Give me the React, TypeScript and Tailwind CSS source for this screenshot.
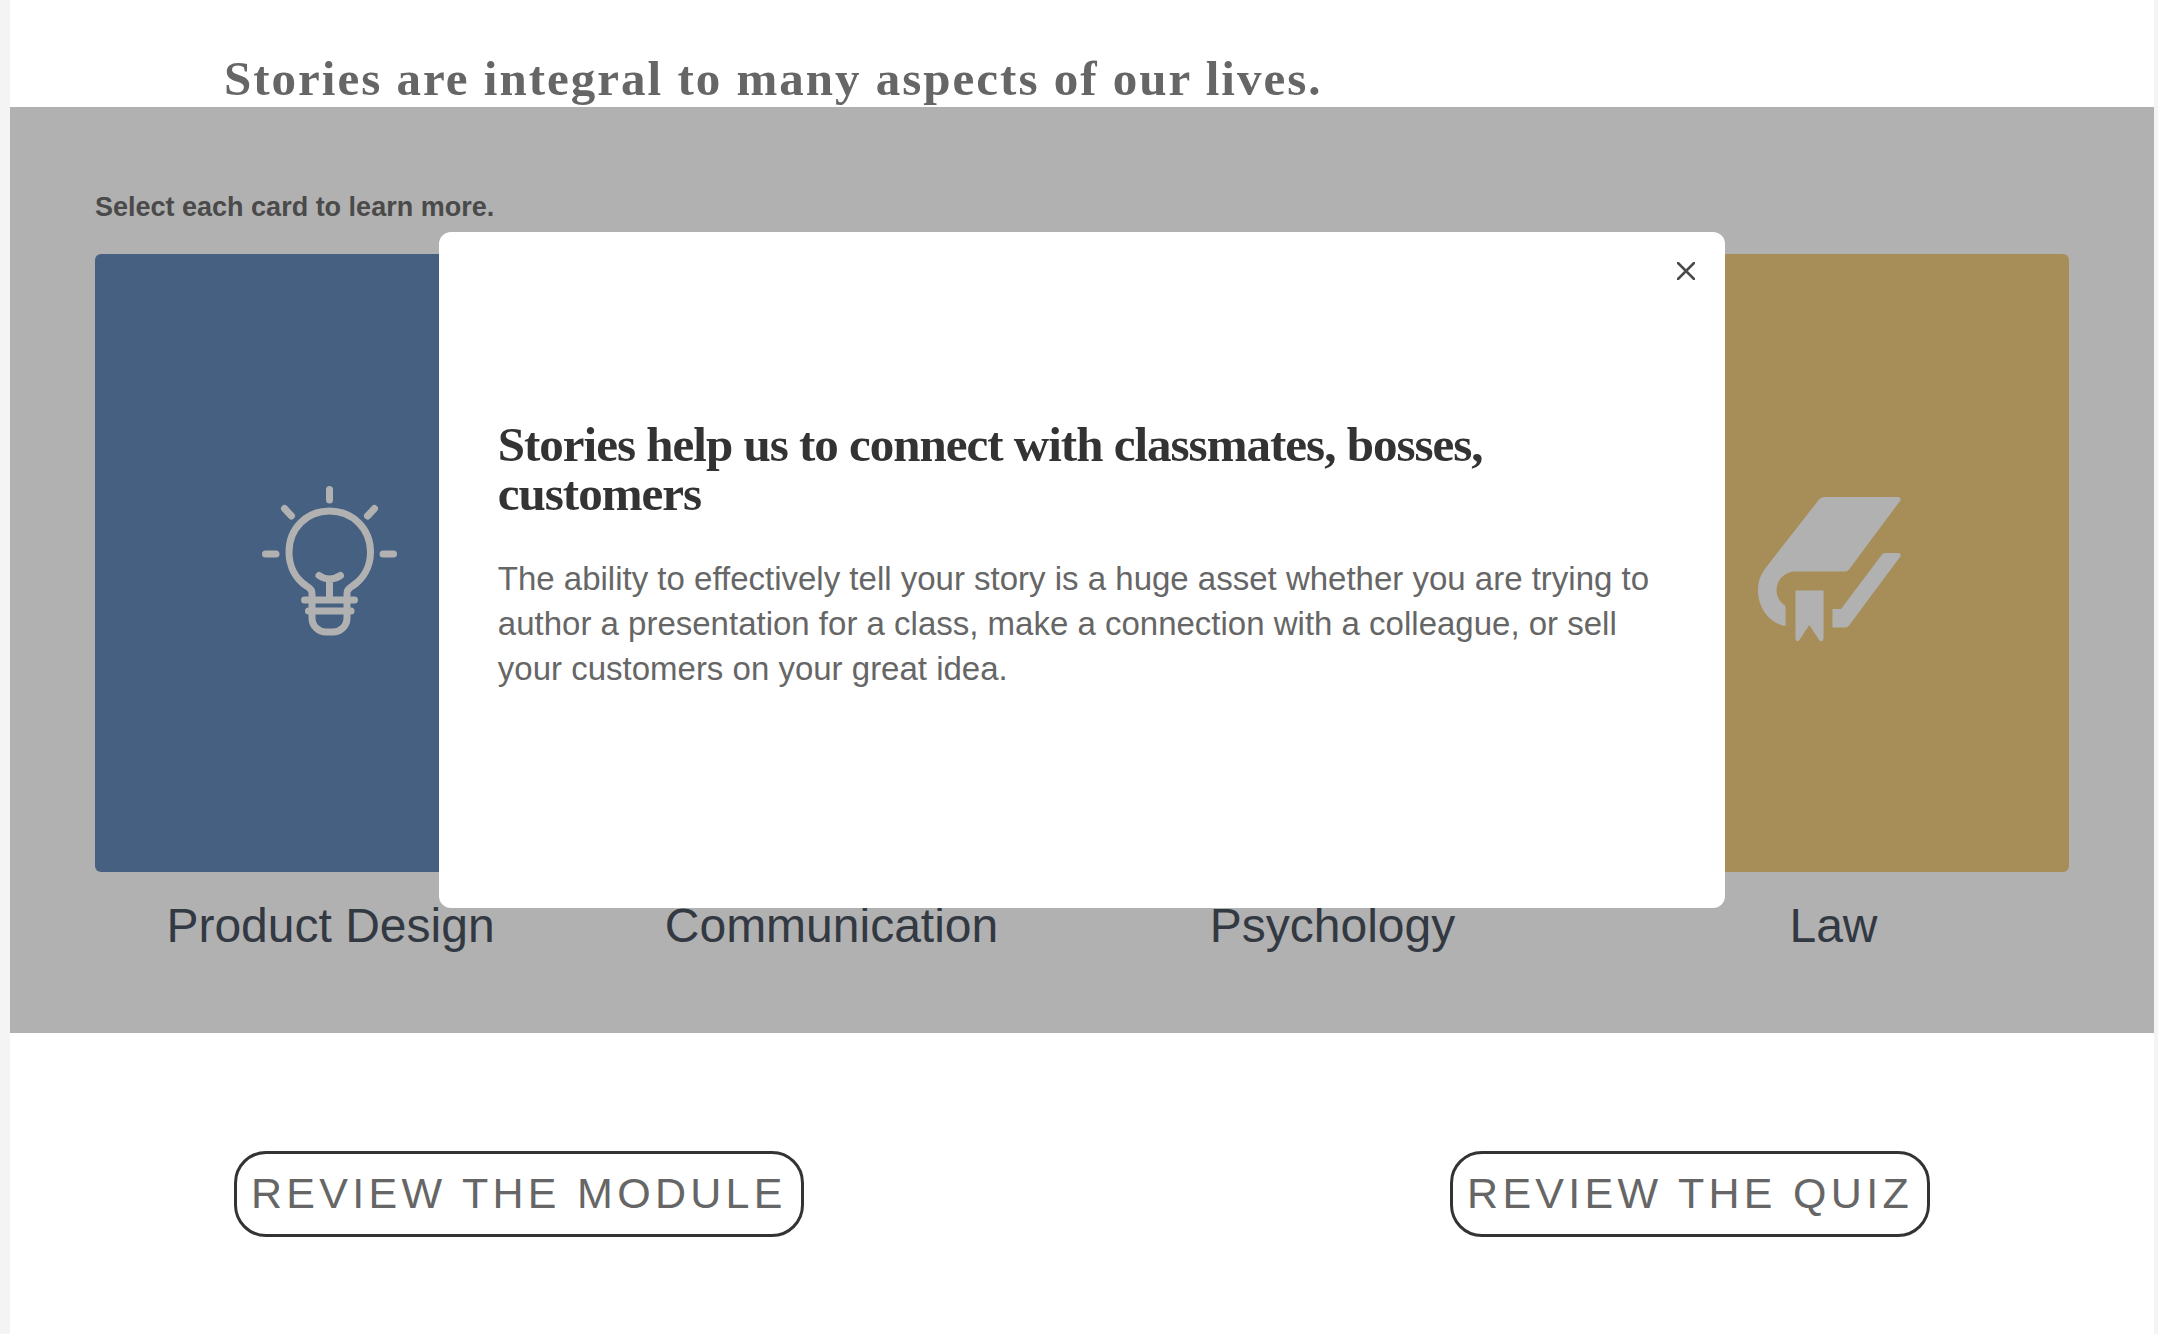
import { useState, type ReactNode } from "react";

function BulbIcon() {
  return (
    <svg
      aria-hidden="true"
      viewBox="0 0 138 154"
      className="h-[154px] w-[138px]"
      fill="none"
      stroke="currentColor"
      strokeWidth="7"
      strokeLinecap="round"
    >
      <path d="M67.500 3.500V14M22.500 22.500L29.500 30M112.500 22.500L105.500 30M3.500 68H14M121 68H131.500" />
      <path d="M50 113V107C50 103.500 47 101.500 44.500 100C34 93 27 81 27 66C27 42.500 44.500 25 67.500 25S108.500 42.500 108.500 66C108.500 81 101 93 90.500 100C88 101.500 85 103.500 85 107V132C85 140 78.500 146 71 146H64C56.500 146 50 140 50 132V113" />
      <path d="M42.500 114H92.500M46.500 125H89M67.500 93V113M57 89.500C63 94 72 94 78.500 89.500" />
    </svg>
  );
}

function BookIcon() {
  return (
    <svg aria-hidden="true" viewBox="0 -14 152 160" className="h-[160px] w-[152px]" fill="currentColor">
      <path d="M66 0H140Q144 .500 142 4L91 72.500Q89.500 74.500 87 74.500H37A18.500 18.500 0 0 0 18.500 93C18.500 100 22.500 106 27.500 109V129C11 126 0 111 0 93C0 84 3 77 8 70.500L61 2.500Q63 0 66 0Z" />
      <path d="M37.500 93.500H65.500V142Q64.500 145.500 61.500 143.500L51.300 128L41 143.500Q38.500 145.500 37.500 142Z" />
      <path d="M127 56H140Q144 56.500 142 60L91 128.500Q89.500 130.500 87 130.500H74.500V112H83L124 57.500Q125 56 127 56Z" />
    </svg>
  );
}

function ChatIcon() {
  return (
    <svg
      aria-hidden="true"
      viewBox="0 0 24 24"
      className="size-[140px]"
      fill="none"
      stroke="currentColor"
      strokeLinejoin="round"
    >
      <path d="M3 4H21V16H10L5 20V16H3Z" />
    </svg>
  );
}

function MindIcon() {
  return (
    <svg aria-hidden="true" viewBox="0 0 24 24" className="size-[140px]" fill="none" stroke="currentColor">
      <path d="M8 22V17C2 13 4 3 12 3S20 9 21 13H19V18H15V22" />
    </svg>
  );
}

type Card = { label: string; color: string; icon: ReactNode };

const cards: Card[] = [
  { label: "Product Design", color: "bg-[#466081]", icon: <BulbIcon /> },
  { label: "Communication", color: "bg-[#7a4a4a]", icon: <ChatIcon /> },
  { label: "Psychology", color: "bg-[#4a7560]", icon: <MindIcon /> },
  { label: "Law", color: "bg-[#a78e58]", icon: <BookIcon /> },
];

export default function App() {
  const [open, setOpen] = useState(true);

  return (
    <div className="min-h-screen bg-[#f4f4f4] pr-1 pl-[10px] font-['Liberation_Sans',Arial,sans-serif]">
      <main className="flex min-h-screen flex-col bg-white">
        <h1 className="px-[214px] pt-[54px] pb-[3px] font-['Georgia','Liberation_Serif',serif] text-[49px] leading-[50px] font-bold tracking-[2px] text-[#666666]">
          Stories are integral to many aspects of our lives.
        </h1>

        <section className="relative bg-[#b1b1b1] px-[85px] pt-[80px] pb-[77px]">
          <h2 className="text-[27px] leading-[40px] font-bold text-[#4a4a4a]">Select each card to learn more.</h2>

          <div className="mt-[27px] grid grid-cols-4 gap-[30px]">
            {cards.map((card) => (
              <button key={card.label} type="button" onClick={() => setOpen(true)} className="flex flex-col">
                <span
                  className={`${card.color} flex h-[618px] w-full items-center justify-center rounded-md text-[#b1b1b1]`}
                >
                  {card.icon}
                </span>
                <span className="mt-[24px] w-full text-center text-[48px] leading-[60px] text-[#333942]">
                  {card.label}
                </span>
              </button>
            ))}
          </div>

          {open && (
            <div className="absolute inset-0 flex items-center justify-center">
              <div
                role="dialog"
                aria-labelledby="dialog-title"
                className="relative flex min-h-[676px] w-3/5 flex-col justify-center rounded-xl bg-white px-[59px] pb-[30px]"
              >
                <button
                  type="button"
                  aria-label="Close"
                  onClick={() => setOpen(false)}
                  className="absolute top-[20px] right-[20px] flex size-[38px] items-center justify-center text-[#4a4a4a]"
                >
                  <svg
                    aria-hidden="true"
                    viewBox="0 0 18 18"
                    className="size-[18px]"
                    fill="none"
                    stroke="currentColor"
                    strokeWidth="2.5"
                    strokeLinecap="round"
                  >
                    <path d="M1 1L17 17M17 1L1 17" />
                  </svg>
                </button>
                <h3
                  id="dialog-title"
                  className="font-['Georgia','Liberation_Serif',serif] text-[49px] leading-[49px] font-bold tracking-[-1px] text-[#333333]"
                >
                  Stories help us to connect with classmates, bosses, customers
                </h3>
                <p className="mt-[38px] text-[33px] leading-[45px] text-[#666666]">
                  The ability to effectively tell your story is a huge asset whether you are trying to author a
                  presentation for a class, make a connection with a colleague, or sell your customers on your great
                  idea.
                </p>
              </div>
            </div>
          )}
        </section>

        <nav className="flex justify-between px-[224px] pt-[118px]">
          <a
            href="#module"
            className="rounded-[32px] border-3 border-[#333333] px-[14px] pt-[14px] pb-[16px] text-[43px] leading-[50px] tracking-widest text-[#666666]"
          >
            REVIEW THE MODULE
          </a>
          <a
            href="#quiz"
            className="rounded-[32px] border-3 border-[#333333] px-[14px] pt-[14px] pb-[16px] text-[43px] leading-[50px] tracking-widest text-[#666666]"
          >
            REVIEW THE QUIZ
          </a>
        </nav>
      </main>
    </div>
  );
}
